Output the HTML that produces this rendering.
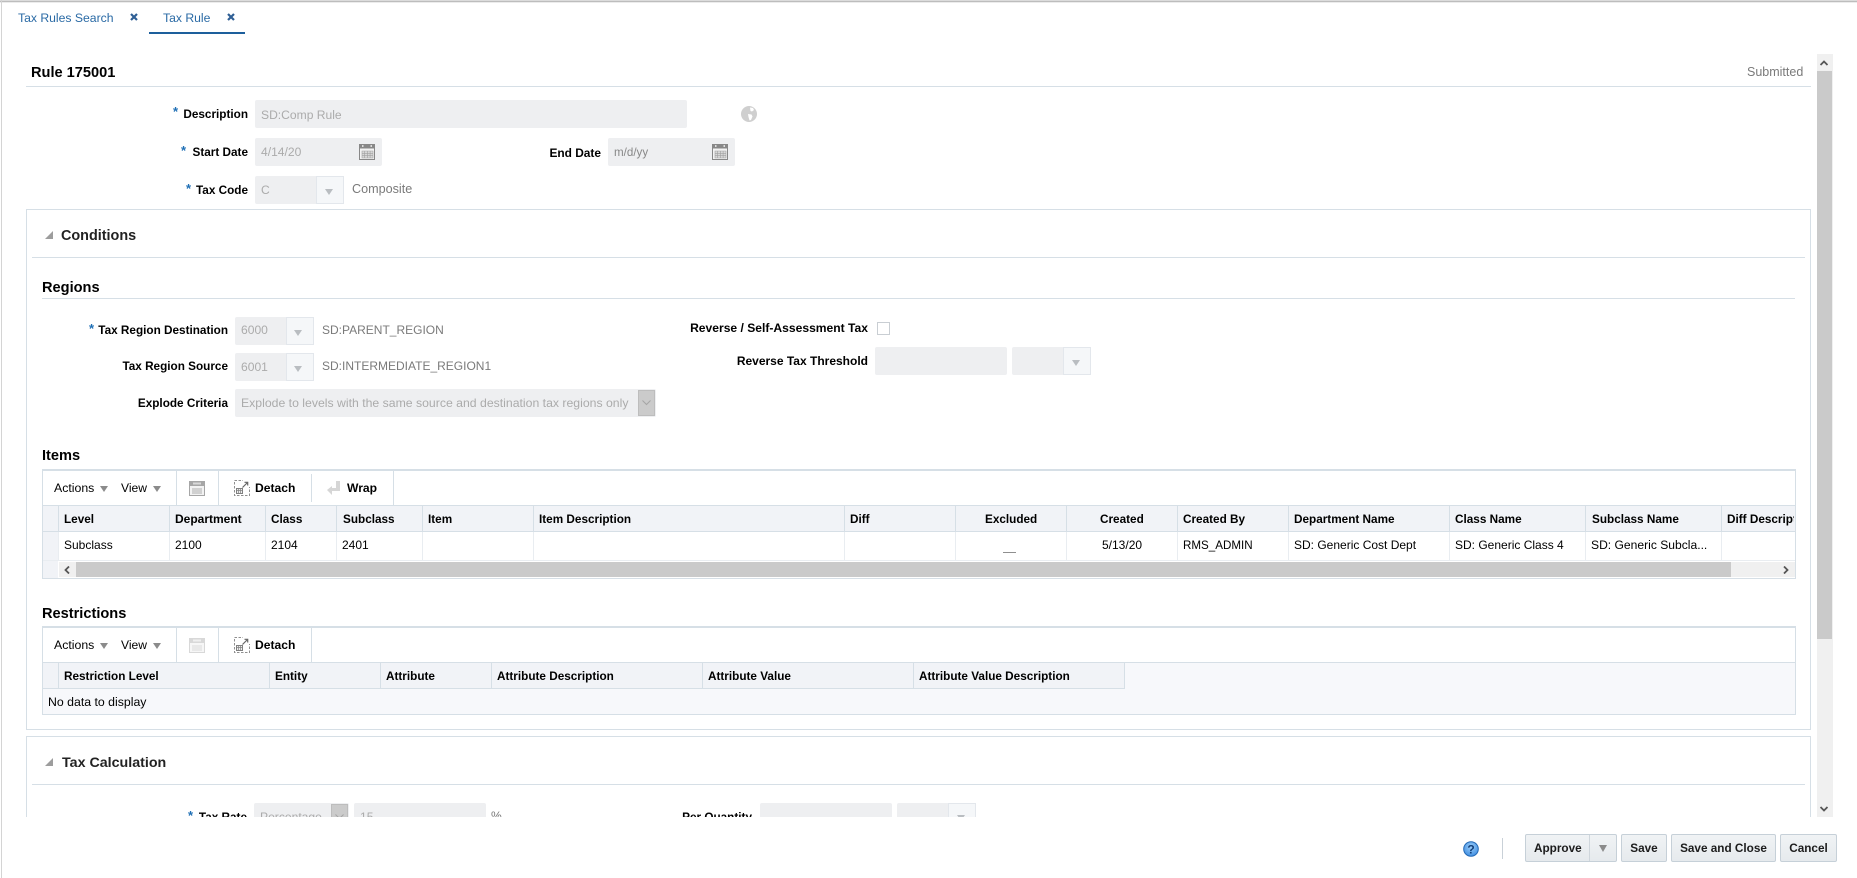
<!DOCTYPE html>
<html><head><meta charset="utf-8"><title>Tax Rule</title>
<style>
html,body{margin:0;padding:0;background:#fff;width:1857px;height:878px;overflow:hidden;font-family:"Liberation Sans",Arial,sans-serif;font-size:12.1px;color:#000}
#m,#r{position:absolute}
#r{left:0;top:0;width:1857px;height:878px;overflow:hidden}
#m{left:0;top:0;width:1857px;height:817px;overflow:hidden}
.t{position:absolute;line-height:14px;height:14px;white-space:nowrap}
.b{font-weight:bold;font-size:11.75px}
.h{font-weight:bold;font-size:14.4px;line-height:16px;height:16px}
.g{color:#7a7a7a}
.d{color:#ababab}
.s{color:#1f6fb5;font-weight:bold;font-size:13px}
.f{position:absolute;background:#eeeff1;border-radius:2px}
.dd{position:absolute;top:0;bottom:0;right:0;background:#f5f7f9;border:1px solid #e3e7ec;box-sizing:border-box}
.tri{position:absolute;width:0;height:0;border-left:4.5px solid transparent;border-right:4.5px solid transparent;border-top:6px solid #b9bdc1}
.tb{border-top-color:#8b8b8b}
.l{position:absolute;background:#d6dfe6}
.c{position:absolute;background:#e9edf1}
.hd{position:absolute;background:#f1f3f7}
.btn{position:absolute;top:834px;height:28px;box-sizing:border-box;border:1px solid #c6d0d8;border-radius:2px;background:linear-gradient(#f0f3f5,#e6eaed);font-weight:bold;text-align:center;line-height:27px;color:#1c1c1c;font-size:11.75px}
svg{position:absolute}
.ch{position:absolute;background:#cbcbcb;border:1px solid #bdbdbd;box-sizing:border-box}
</style></head><body>
<div id="r">
<div style="position:absolute;left:0;top:0;width:1857px;height:1px;background:#dcdcdc"></div>
<div style="position:absolute;left:0;top:1px;width:1857px;height:1px;background:#bdbdbd"></div>
<div style="position:absolute;left:0;top:2px;width:1857px;height:1px;background:#ececec"></div>
<div style="position:absolute;left:1px;top:0;width:1px;height:878px;background:#d4d4d4"></div>
<div id="m">

<!-- tabs -->
<div class="t" style="left:18px;top:11px;color:#2a6aa5;font-size:12.2px">Tax Rules Search</div>
<svg style="left:130px;top:13px" width="8" height="8" viewBox="0 0 8 8"><path d="M1 1L7 7M7 1L1 7" stroke="#2f5f95" stroke-width="2.200"/></svg>
<div class="t" style="left:163px;top:11px;color:#2a6aa5;font-size:12.2px">Tax Rule</div>
<svg style="left:227px;top:13px" width="8" height="8" viewBox="0 0 8 8"><path d="M1 1L7 7M7 1L1 7" stroke="#2f5f95" stroke-width="2.200"/></svg>
<div style="position:absolute;left:149px;top:32px;width:96px;height:2px;background:#1d5f9c"></div>

<!-- header -->
<div class="t h" style="left:31px;top:65px;font-size:14.6px">Rule 175001</div>
<div class="t g" style="left:1747px;top:65px;font-size:12.5px">Submitted</div>
<div class="l" style="left:26px;top:86px;width:1785px;height:1px"></div>

<!-- description -->
<div class="t s" style="left:173px;top:105px">*</div>
<div class="t b" style="right:1609px;top:108px">Description</div>
<div class="f" style="left:255px;top:100px;width:432px;height:28px"></div>
<div class="t d" style="left:261px;top:108px">SD:Comp Rule</div>
<svg style="left:741px;top:106px" width="16" height="16" viewBox="0 0 16 16"><ellipse cx="8" cy="8" rx="8" ry="8" fill="#cfcfcf"/><path d="M9 1.500l3 .5 1 2-2 1.500-1.500-.5zM7 8l3.500.5 1 2-1.500 3.500-1.500 .5-1-3.500z" fill="#fff"/></svg>

<div class="t s" style="left:181px;top:144px">*</div>
<div class="t b" style="right:1609px;top:146px">Start Date</div>
<div class="f" style="left:255px;top:138px;width:127px;height:28px"></div>
<div class="t d" style="left:261px;top:145px">4/14/20</div>
<svg style="left:359px;top:144px" width="16" height="16" viewBox="0 0 16 16"><rect x=".5" y=".5" width="15" height="15" fill="#f3f3f3" stroke="#888"/><rect x="1" y="1" width="14" height="3.500" fill="#888"/><rect x="3" y="1" width="1.500" height="2" fill="#ddd"/><rect x="11.500" y="1" width="1.500" height="2" fill="#ddd"/><path d="M3 7h11v7H3zM3 9.300h11M3 11.600h11M5.700 7v7M8.400 7v7M11.100 7v7" fill="#d8d8d8" stroke="#a0a0a0" stroke-width=".6"/></svg>

<div class="t b" style="right:1256px;top:146px;font-size:11.9px">End Date</div>
<div class="f" style="left:608px;top:138px;width:127px;height:28px"></div>
<div class="t" style="left:614px;top:146px;color:#888;font-size:11.6px">m/d/yy</div>
<svg style="left:712px;top:144px" width="16" height="16" viewBox="0 0 16 16"><rect x=".5" y=".5" width="15" height="15" fill="#f3f3f3" stroke="#888"/><rect x="1" y="1" width="14" height="3.500" fill="#888"/><rect x="3" y="1" width="1.500" height="2" fill="#ddd"/><rect x="11.500" y="1" width="1.500" height="2" fill="#ddd"/><path d="M3 7h11v7H3zM3 9.300h11M3 11.600h11M5.700 7v7M8.400 7v7M11.100 7v7" fill="#d8d8d8" stroke="#a0a0a0" stroke-width=".6"/></svg>

<div class="t s" style="left:186px;top:182px">*</div>
<div class="t b" style="right:1609px;top:184px">Tax Code</div>
<div class="f" style="left:255px;top:176px;width:89px;height:28px"><div class="dd" style="width:28px"></div><div class="tri" style="left:70px;top:13px"></div></div>
<div class="t d" style="left:261px;top:183px">C</div>
<div class="t g" style="left:352px;top:182px;font-size:12.6px">Composite</div>

<!-- Conditions panel -->
<div style="position:absolute;left:26px;top:209px;width:1785px;height:521px;box-sizing:border-box;border:1px solid #d6dfe6"></div>
<svg style="left:45px;top:231px" width="8" height="8" viewBox="0 0 8 8"><path d="M8 0V8H0z" fill="#9d9d9d"/></svg>
<div class="t h" style="left:61px;top:227px;color:#222;margin-top:1px">Conditions</div>
<div class="l" style="left:32px;top:257px;width:1773px;height:1px"></div>
<div class="t h" style="left:42px;top:280px;font-size:14.6px">Regions</div>
<div class="l" style="left:42px;top:298px;width:1753px;height:1px"></div>

<div class="t s" style="left:89px;top:322px">*</div>
<div class="t b" style="right:1629px;top:324px">Tax Region Destination</div>
<div class="f" style="left:235px;top:317px;width:79px;height:28px"><div class="dd" style="width:28px"></div><div class="tri" style="left:59px;top:13px"></div></div>
<div class="t d" style="left:241px;top:323px">6000</div>
<div class="t g" style="left:322px;top:323px;font-size:12px">SD:PARENT_REGION</div>

<div class="t b" style="right:1629px;top:360px">Tax Region Source</div>
<div class="f" style="left:235px;top:353px;width:79px;height:28px"><div class="dd" style="width:28px"></div><div class="tri" style="left:59px;top:13px"></div></div>
<div class="t d" style="left:241px;top:360px">6001</div>
<div class="t g" style="left:322px;top:359px;font-size:12px">SD:INTERMEDIATE_REGION1</div>

<div class="t b" style="right:1629px;top:397px">Explode Criteria</div>
<div class="f" style="left:235px;top:389px;width:421px;height:28px"></div>
<div class="t d" style="left:241px;top:396px;font-size:12.25px">Explode to levels with the same source and destination tax regions only</div>
<div class="ch" style="left:638px;top:390px;width:17px;height:26px"></div>
<svg style="left:642px;top:400px" width="9" height="6" viewBox="0 0 9 6"><path d="M.5 .5L4.500 4.500 8.500 .5" fill="none" stroke="#a5a5a5"/></svg>

<div class="t b" style="right:989px;top:321px;font-size:12.1px">Reverse / Self-Assessment Tax</div>
<div style="position:absolute;left:877px;top:322px;width:13px;height:13px;box-sizing:border-box;border:1px solid #c9ced3;background:#fff"></div>
<div class="t b" style="right:989px;top:354px;font-size:12px">Reverse Tax Threshold</div>
<div class="f" style="left:875px;top:347px;width:132px;height:28px"></div>
<div class="f" style="left:1012px;top:347px;width:79px;height:28px"><div class="dd" style="width:28px"></div><div class="tri" style="left:60px;top:13px"></div></div>

<!-- Items -->
<div class="t h" style="left:42px;top:448px;font-size:14.6px">Items</div>
<div class="l" style="left:42px;top:469px;width:1753px;height:2px"></div>
<div class="l" style="left:42px;top:469px;width:1px;height:110px"></div>
<div class="l" style="left:1795px;top:469px;width:1px;height:110px"></div>
<div class="l" style="left:42px;top:578px;width:1754px;height:1px"></div>
<div class="t" style="left:54px;top:481px;font-size:12.3px">Actions</div><div class="tri tb" style="left:100px;top:486px"></div>
<div class="t" style="left:121px;top:481px">View</div><div class="tri tb" style="left:153px;top:486px"></div>
<div class="l" style="left:176px;top:471px;width:1px;height:34px"></div>
<div class="l" style="left:218px;top:471px;width:1px;height:34px"></div>
<svg style="left:189px;top:481px" width="16" height="15" viewBox="0 0 16 15"><rect width="16" height="15" fill="#a6a6a6"/><rect x="1" y="5" width="14" height="9" fill="#f2f2f2"/><path d="M4 7v6M6 7v6M8 7v6M10 7v6M12 7v6" stroke="#adadad" stroke-width="1"/><rect x="4" y="1.500" width="8" height="2" fill="#d8d8d8"/></svg>
<svg style="left:234px;top:480px" width="16" height="16" viewBox="0 0 16 16"><rect x=".5" y=".5" width="15" height="15" fill="none" stroke="#8f8f8f" stroke-dasharray="2.500 1.500"/><rect x="9" y="0" width="7" height="7" fill="#fff"/><path d="M8.500 7.500L13.500 2.500M10.500 2.300h3.200V5.500" fill="none" stroke="#666" stroke-width="1.200"/><rect x="2.500" y="8.500" width="6" height="5" fill="#eee" stroke="#808080"/><path d="M2.500 10.500h6M4.500 8.500v5M6.500 8.500v5" stroke="#808080" stroke-width=".7"/></svg>
<div class="t b" style="left:255px;top:481px;font-size:12.1px">Detach</div>
<div class="l" style="left:311px;top:474px;width:1px;height:28px"></div>
<svg style="left:327px;top:481px" width="13" height="14" viewBox="0 0 13 14"><path d="M9 0h4v10H5v4L0 9l5-4v2h4z" fill="#d6d6d6"/></svg>
<div class="t b" style="left:347px;top:481px;font-size:12.1px">Wrap</div>
<div class="l" style="left:393px;top:471px;width:1px;height:34px"></div>

<div class="hd" style="left:43px;top:506px;width:1752px;height:25px"></div>
<div class="l" style="left:43px;top:505px;width:1752px;height:1px"></div>
<div class="l" style="left:43px;top:531px;width:1752px;height:1px"></div>
<div style="position:absolute;left:43px;top:532px;width:15px;height:46px;background:#f1f3f7"></div>
<div class="c" style="left:43px;top:560px;width:1752px;height:1px"></div>

<div class="l" style="left:58px;top:506px;width:1px;height:25px"></div>
<div class="l" style="left:169px;top:506px;width:1px;height:25px"></div>
<div class="l" style="left:265px;top:506px;width:1px;height:25px"></div>
<div class="l" style="left:336px;top:506px;width:1px;height:25px"></div>
<div class="l" style="left:422px;top:506px;width:1px;height:25px"></div>
<div class="l" style="left:533px;top:506px;width:1px;height:25px"></div>
<div class="l" style="left:844px;top:506px;width:1px;height:25px"></div>
<div class="l" style="left:955px;top:506px;width:1px;height:25px"></div>
<div class="l" style="left:1066px;top:506px;width:1px;height:25px"></div>
<div class="l" style="left:1177px;top:506px;width:1px;height:25px"></div>
<div class="l" style="left:1288px;top:506px;width:1px;height:25px"></div>
<div class="l" style="left:1449px;top:506px;width:1px;height:25px"></div>
<div class="l" style="left:1585px;top:506px;width:1px;height:25px"></div>
<div class="l" style="left:1721px;top:506px;width:1px;height:25px"></div>
<div class="c" style="left:58px;top:532px;width:1px;height:28px"></div>
<div class="c" style="left:169px;top:532px;width:1px;height:28px"></div>
<div class="c" style="left:265px;top:532px;width:1px;height:28px"></div>
<div class="c" style="left:336px;top:532px;width:1px;height:28px"></div>
<div class="c" style="left:422px;top:532px;width:1px;height:28px"></div>
<div class="c" style="left:533px;top:532px;width:1px;height:28px"></div>
<div class="c" style="left:844px;top:532px;width:1px;height:28px"></div>
<div class="c" style="left:955px;top:532px;width:1px;height:28px"></div>
<div class="c" style="left:1066px;top:532px;width:1px;height:28px"></div>
<div class="c" style="left:1177px;top:532px;width:1px;height:28px"></div>
<div class="c" style="left:1288px;top:532px;width:1px;height:28px"></div>
<div class="c" style="left:1449px;top:532px;width:1px;height:28px"></div>
<div class="c" style="left:1585px;top:532px;width:1px;height:28px"></div>
<div class="c" style="left:1721px;top:532px;width:1px;height:28px"></div>

<div class="t b" style="left:64px;top:513px">Level</div>
<div class="t b" style="left:175px;top:512px;font-size:12px">Department</div>
<div class="t b" style="left:271px;top:513px">Class</div>
<div class="t b" style="left:343px;top:513px">Subclass</div>
<div class="t b" style="left:428px;top:513px">Item</div>
<div class="t b" style="left:539px;top:513px">Item Description</div>
<div class="t b" style="left:850px;top:513px">Diff</div>
<div class="t b" style="left:985px;top:513px">Excluded</div>
<div class="t b" style="left:1100px;top:513px">Created</div>
<div class="t b" style="left:1183px;top:513px">Created By</div>
<div class="t b" style="left:1294px;top:513px">Department Name</div>
<div class="t b" style="left:1455px;top:513px">Class Name</div>
<div class="t b" style="left:1592px;top:513px">Subclass Name</div>
<div class="t b" style="left:1727px;top:513px;width:67px;overflow:hidden">Diff Description</div>

<div class="t" style="left:64px;top:538px;font-size:12px">Subclass</div>
<div class="t" style="left:175px;top:538px;font-size:12px">2100</div>
<div class="t" style="left:271px;top:538px;font-size:12px">2104</div>
<div class="t" style="left:342px;top:538px;font-size:12px">2401</div>
<div style="position:absolute;left:1003px;top:552px;width:13px;height:1px;background:#8f8f8f"></div>
<div class="t" style="left:1102px;top:538px;font-size:12px">5/13/20</div>
<div class="t" style="left:1183px;top:539px;font-size:11.6px">RMS_ADMIN</div>
<div class="t" style="left:1294px;top:538px;font-size:12px">SD: Generic Cost Dept</div>
<div class="t" style="left:1455px;top:538px;font-size:12px">SD: Generic Class 4</div>
<div class="t" style="left:1591px;top:538px;font-size:12.1px">SD: Generic Subcla...</div>

<div style="position:absolute;left:59px;top:562px;width:1736px;height:15px;background:#f0f0f0"></div>
<div style="position:absolute;left:76px;top:562px;width:1655px;height:15px;background:#cacaca"></div>
<svg style="left:64px;top:566px" width="6" height="8" viewBox="0 0 6 8"><path d="M5 .5L1.500 4 5 7.500" fill="none" stroke="#555" stroke-width="1.800"/></svg>
<svg style="left:1783px;top:566px" width="6" height="8" viewBox="0 0 6 8"><path d="M1 .5L4.500 4 1 7.500" fill="none" stroke="#555" stroke-width="1.800"/></svg>

<!-- Restrictions -->
<div class="t h" style="left:42px;top:606px;font-size:14.6px">Restrictions</div>
<div class="l" style="left:42px;top:626px;width:1753px;height:2px"></div>
<div class="l" style="left:42px;top:626px;width:1px;height:89px"></div>
<div class="l" style="left:1795px;top:626px;width:1px;height:89px"></div>
<div class="l" style="left:42px;top:714px;width:1754px;height:1px"></div>
<div class="t" style="left:54px;top:638px;font-size:12.3px">Actions</div><div class="tri tb" style="left:100px;top:643px"></div>
<div class="t" style="left:121px;top:638px">View</div><div class="tri tb" style="left:153px;top:643px"></div>
<div class="l" style="left:176px;top:628px;width:1px;height:34px"></div>
<div class="l" style="left:218px;top:628px;width:1px;height:34px"></div>
<svg style="left:189px;top:638px" width="16" height="15" viewBox="0 0 16 15"><rect width="16" height="15" fill="#d8d8d8"/><rect x="1" y="5" width="14" height="9" fill="#f6f6f6"/><path d="M4 7v6M6 7v6M8 7v6M10 7v6M12 7v6" stroke="#dadada" stroke-width="1"/><rect x="4" y="1.500" width="8" height="2" fill="#efefef"/></svg>
<svg style="left:234px;top:637px" width="16" height="16" viewBox="0 0 16 16"><rect x=".5" y=".5" width="15" height="15" fill="none" stroke="#8f8f8f" stroke-dasharray="2.500 1.500"/><rect x="9" y="0" width="7" height="7" fill="#fff"/><path d="M8.500 7.500L13.500 2.500M10.500 2.300h3.200V5.500" fill="none" stroke="#666" stroke-width="1.200"/><rect x="2.500" y="8.500" width="6" height="5" fill="#eee" stroke="#808080"/><path d="M2.500 10.500h6M4.500 8.500v5M6.500 8.500v5" stroke="#808080" stroke-width=".7"/></svg>
<div class="t b" style="left:255px;top:638px;font-size:12.1px">Detach</div>
<div class="l" style="left:311px;top:628px;width:1px;height:34px"></div>

<div style="position:absolute;left:43px;top:663px;width:1752px;height:51px;background:#f7f8fb"></div>
<div class="hd" style="left:43px;top:663px;width:1082px;height:25px"></div>
<div class="l" style="left:43px;top:662px;width:1752px;height:1px"></div>
<div class="l" style="left:43px;top:688px;width:1082px;height:1px"></div>
<div class="l" style="left:58px;top:663px;width:1px;height:25px"></div>
<div class="l" style="left:269px;top:663px;width:1px;height:25px"></div>
<div class="l" style="left:380px;top:663px;width:1px;height:25px"></div>
<div class="l" style="left:491px;top:663px;width:1px;height:25px"></div>
<div class="l" style="left:702px;top:663px;width:1px;height:25px"></div>
<div class="l" style="left:913px;top:663px;width:1px;height:25px"></div>
<div class="l" style="left:1124px;top:663px;width:1px;height:25px"></div>
<div class="t b" style="left:64px;top:670px">Restriction Level</div>
<div class="t b" style="left:275px;top:670px">Entity</div>
<div class="t b" style="left:386px;top:670px">Attribute</div>
<div class="t b" style="left:497px;top:670px">Attribute Description</div>
<div class="t b" style="left:708px;top:670px">Attribute Value</div>
<div class="t b" style="left:919px;top:670px">Attribute Value Description</div>
<div class="t" style="left:48px;top:695px;font-size:12.3px">No data to display</div>

<!-- Tax Calculation -->
<div style="position:absolute;left:26px;top:736px;width:1785px;height:120px;box-sizing:border-box;border:1px solid #d6dfe6"></div>
<svg style="left:45px;top:758px" width="8" height="8" viewBox="0 0 8 8"><path d="M8 0V8H0z" fill="#9d9d9d"/></svg>
<div class="t h" style="left:62px;top:755px;color:#222;font-size:14.25px">Tax Calculation</div>
<div class="l" style="left:32px;top:784px;width:1773px;height:1px"></div>
<div class="t s" style="left:188px;top:809px">*</div>
<div class="t b" style="right:1610px;top:811px">Tax Rate</div>
<div class="f" style="left:254px;top:803px;width:95px;height:28px"></div>
<div class="t d" style="left:260px;top:810px">Percentage</div>
<div class="ch" style="left:331px;top:804px;width:17px;height:26px"></div>
<svg style="left:335px;top:814px" width="9" height="6" viewBox="0 0 9 6"><path d="M.5 .5L4.500 4.500 8.500 .5" fill="none" stroke="#a5a5a5"/></svg>
<div class="f" style="left:354px;top:803px;width:132px;height:28px"></div>
<div class="t d" style="left:360px;top:810px">15</div>
<div class="t g" style="left:491px;top:809px">%</div>
<div class="t b" style="right:1105px;top:811px">Per Quantity</div>
<div class="f" style="left:760px;top:803px;width:132px;height:28px"></div>
<div class="f" style="left:897px;top:803px;width:79px;height:28px"><div class="dd" style="width:28px"></div><div class="tri" style="left:60px;top:12px"></div></div>

<!-- vertical scrollbar -->
<div style="position:absolute;left:1817px;top:54px;width:16px;height:763px;background:#f0f0f0"></div>
<div style="position:absolute;left:1817px;top:71px;width:15px;height:568px;background:#cacaca"></div>
<svg style="left:1820px;top:60px" width="8" height="6" viewBox="0 0 8 6"><path d="M.5 5L4 1.500 7.500 5" fill="none" stroke="#555" stroke-width="1.800"/></svg>
<svg style="left:1820px;top:806px" width="8" height="6" viewBox="0 0 8 6"><path d="M.5 1L4 4.500 7.500 1" fill="none" stroke="#555" stroke-width="1.800"/></svg>
</div>

<!-- footer -->
<svg style="left:1463px;top:841px" width="16" height="16" viewBox="0 0 16 16"><defs><radialGradient id="hg" cx=".5" cy=".35" r=".7"><stop offset="0" stop-color="#9bcdf8"/><stop offset="1" stop-color="#3a8ae0"/></radialGradient></defs><circle cx="8" cy="8" r="7.300" fill="url(#hg)" stroke="#2268b5"/><text x="8" y="12.500" text-anchor="middle" font-family="Liberation Sans" font-weight="bold" font-size="12" fill="#123f7a">?</text></svg>
<div style="position:absolute;left:1502px;top:838px;width:1px;height:21px;background:#c9d1d8"></div>
<div class="btn" style="left:1525px;width:92px;text-align:left;padding-left:8px">Approve<div style="position:absolute;left:63px;top:0;width:1px;height:26px;background:#cfd6dc"></div><div class="tri tb" style="left:73px;top:10px;border-top-width:7px"></div></div>
<div class="btn" style="left:1621px;width:46px">Save</div>
<div class="btn" style="left:1671px;width:105px">Save and Close</div>
<div class="btn" style="left:1780px;width:57px">Cancel</div>
</div>
</body></html>
